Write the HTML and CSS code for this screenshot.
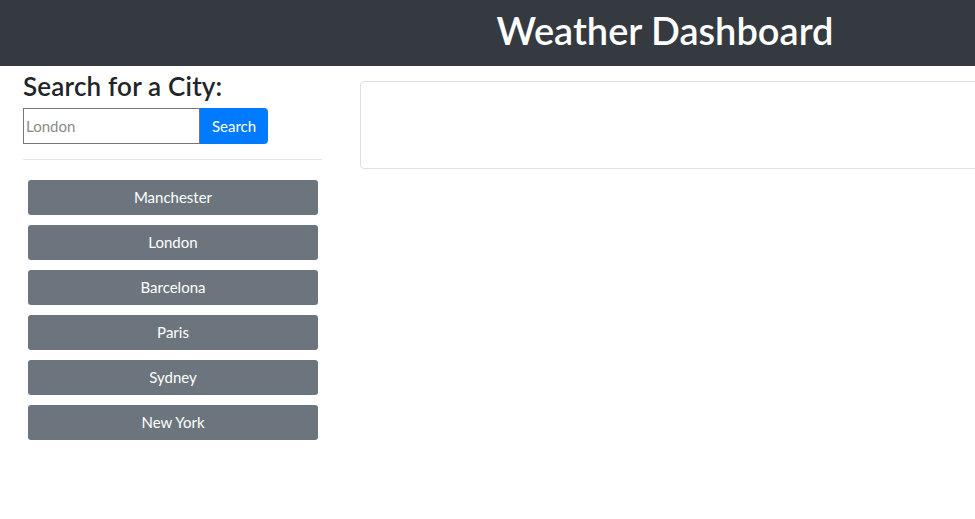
FILE: index.html
```html
<!DOCTYPE html>
<html lang="en">
<head>
<meta charset="utf-8">
<title>Weather Dashboard</title>
<link rel="stylesheet" href="styles.css">
</head>
<body>
<header class="topbar">
  <div class="topbar-spacer"></div>
  <h1 class="topbar-title">Weather Dashboard</h1>
</header>
<main class="layout">
  <aside class="sidebar">
    <h2 class="search-title">Search for a City:</h2>
    <form class="search-form">
      <input class="search-input" type="text" placeholder="London">
      <button class="search-btn" type="button">Search</button>
    </form>
    <hr class="divider">
    <div class="history">
      <button class="city-btn" type="button">Manchester</button>
      <button class="city-btn" type="button">London</button>
      <button class="city-btn" type="button">Barcelona</button>
      <button class="city-btn" type="button">Paris</button>
      <button class="city-btn" type="button">Sydney</button>
      <button class="city-btn" type="button">New York</button>
    </div>
  </aside>
  <section class="content">
    <div class="current-card"></div>
  </section>
</main>
</body>
</html>
```
FILE: styles.css
```css
html, body {
  margin: 0;
  padding: 0;
  overflow-x: hidden;
  background: #fff;
  font-family: Lato, "Open Sans", sans-serif;
  color: #212529;
}
.topbar {
  display: flex;
  align-items: center;
  height: 66px;
  background: #343a40;
}
.topbar-spacer {
  width: 355px;
  flex: none;
}
.topbar-title {
  flex: 1;
  margin: 0 0 6px;
  text-align: center;
  color: #fff;
  font-size: 38px;
  font-weight: 600;
  letter-spacing: 0;
}
.layout {
  display: flex;
  align-items: flex-start;
  padding-top: 5px;
}
.sidebar {
  width: 299px;
  margin-left: 23px;
  flex: none;
}
.search-title {
  margin: 0 0 7px;
  font-size: 26px;
  font-weight: 600;
  line-height: 30px;
  letter-spacing: 0.2px;
  color: #212529;
}
.search-form {
  display: flex;
  height: 36px;
}
.search-input {
  width: 177px;
  box-sizing: border-box;
  height: 36px;
  margin: 0;
  border: 1px solid #767676;
  padding: 0 2px;
  font-family: inherit;
  font-size: 15px;
  color: #212529;
  outline: none;
}
.search-input::placeholder {
  color: #8a8a8a;
}
.search-btn {
  width: 68px;
  height: 36px;
  margin: 0;
  border: none;
  border-radius: 0 4px 4px 0;
  background: #007bff;
  color: #fff;
  font-family: inherit;
  font-size: 15px;
}
.divider {
  margin: 15px 0 20px;
  border: 0;
  border-top: 1px solid #e5e5e5;
}
.history {
  display: flex;
  flex-direction: column;
  gap: 10px;
  padding: 0 4px 0 5px;
}
.city-btn {
  height: 35px;
  padding-bottom: 2px;
  border: none;
  border-radius: 3px;
  background: #6c757d;
  color: #fff;
  font-family: inherit;
  font-size: 15px;
}
.content {
  margin-left: 38px;
  padding-top: 10px;
  flex: none;
}
.current-card {
  width: 640px;
  height: 86px;
  border: 1px solid #dfdfdf;
  border-radius: 4px;
}
```
